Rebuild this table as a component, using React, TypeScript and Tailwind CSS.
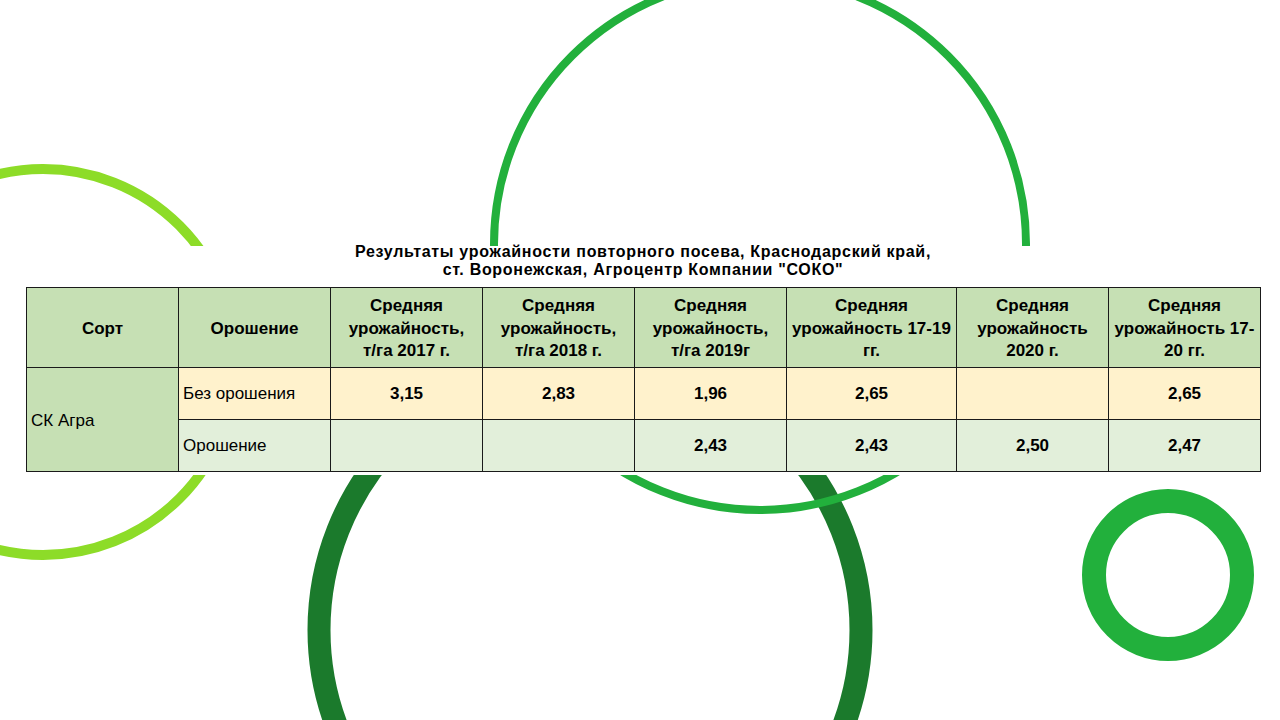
import React from "react";

const headers = [
  ["Сорт"],
  ["Орошение"],
  ["Средняя", "урожайность,", "т/га 2017 г."],
  ["Средняя", "урожайность,", "т/га 2018 г."],
  ["Средняя", "урожайность,", "т/га 2019г"],
  ["Средняя", "урожайность 17-19", "гг."],
  ["Средняя", "урожайность", "2020 г."],
  ["Средняя", "урожайность 17-", "20 гг."],
];

const widths = ["w-[152px]", "w-[152px]", "w-[152px]", "w-[152px]", "w-[152px]", "w-[170px]", "w-[152px]", "w-[152px]"];

const rows = [
  { label: "Без орошения", bg: "bg-[#fff2cc]", values: ["3,15", "2,83", "1,96", "2,65", "", "2,65"] },
  { label: "Орошение", bg: "bg-[#e2efda]", values: ["", "", "2,43", "2,43", "2,50", "2,47"] },
];

const Rings = () => (
  <svg className="absolute inset-0" width="1280" height="720" viewBox="0 0 1280 720" fill="none">
    <circle cx="43" cy="362" r="193" stroke="#8ddc28" strokeWidth="10" />
    <circle cx="590" cy="630" r="271" stroke="#1b7a2c" strokeWidth="23" />
    <circle cx="760" cy="244" r="266" stroke="#22b03c" strokeWidth="8" />
    <circle cx="1168" cy="575" r="74" stroke="#22b03c" strokeWidth="24" />
  </svg>
);

const YieldTable = () => {
  return (
    <table className="ml-[26px] border-collapse table-fixed w-[1234px] text-black text-[17px]">
      <colgroup>
        {widths.map((w, i) => (
          <col key={i} className={w} />
        ))}
      </colgroup>
      <thead>
        <tr className="h-[80px] bg-[#c6e0b4]">
          {headers.map((lines, i) => (
            <th
              key={i}
              className="border border-[#1a1a1a] px-0 pt-[3px] pb-0 font-bold text-center align-middle leading-[22.5px] whitespace-nowrap"
            >
              {lines.map((l, j) => (
                <div key={j}>{l}</div>
              ))}
            </th>
          ))}
        </tr>
      </thead>
      <tbody>
        {rows.map((row, r) => (
          <tr key={r} className={`h-[52px] ${row.bg}`}>
            {r === 0 && (
              <td rowSpan={2} className="border border-[#1a1a1a] bg-[#c6e0b4] pl-[4px] pt-[2px] align-middle">
                СК Агра
              </td>
            )}
            <td className="border border-[#1a1a1a] pl-[4px] align-middle">{row.label}</td>
            {row.values.map((v, i) => (
              <td key={i} className="border border-[#1a1a1a] text-center font-bold align-middle">
                {v}
              </td>
            ))}
          </tr>
        ))}
      </tbody>
    </table>
  );
};

export default function App() {
  return (
    <div
      className="relative w-[1280px] h-[720px] overflow-hidden bg-white"
      style={{ fontFamily: '"Liberation Sans", Arial, sans-serif' }}
    >
      <Rings />
      <div className="relative pt-[246px]">
        <div className="flex flex-col bg-white h-[229px]">
          <div className="-mt-[3px] ml-[26px] w-[1234px] text-center font-bold text-[16px] tracking-[0.7px] leading-[18px] text-black">
            <p>Результаты урожайности повторного посева, Краснодарский край,</p>
            <p>ст. Воронежская, Агроцентр Компании "СОКО"</p>
          </div>
          <div className="mt-[8px]">
            <YieldTable />
          </div>
        </div>
      </div>
    </div>
  );
}
